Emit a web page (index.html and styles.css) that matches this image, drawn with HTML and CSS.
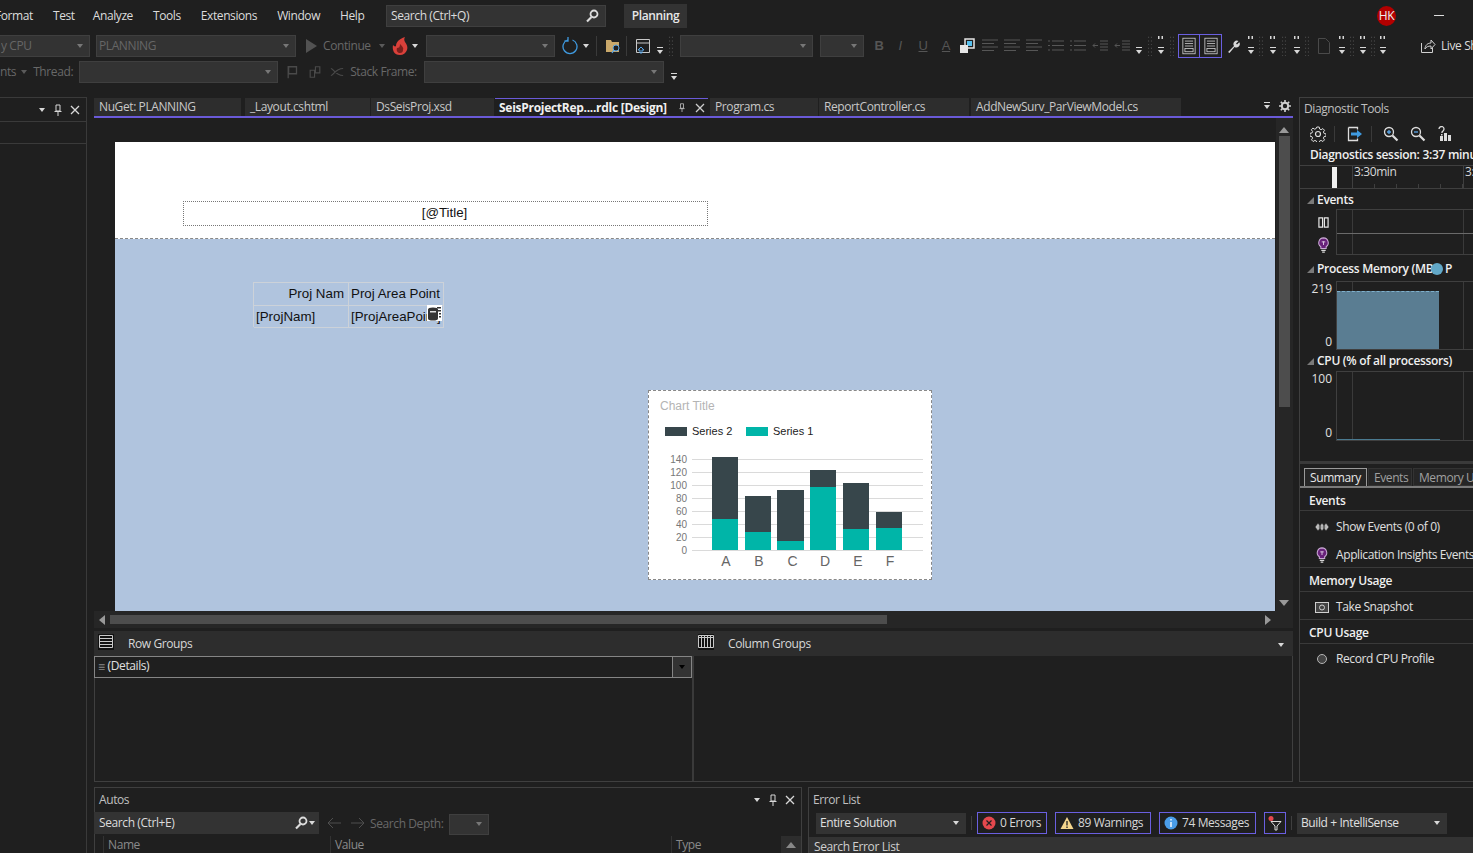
FILE: index.html
```html
<!DOCTYPE html>
<html lang="en">
<head>
<meta charset="utf-8">
<title>Planning - Visual Studio</title>
<link rel="stylesheet" href="styles.css">
</head>
<body>
<svg class="defs" width="0" height="0">
  <symbol id="caret" viewBox="0 0 8 8"><path d="M1 2h6L4 6z" fill="currentColor"/></symbol>
  <symbol id="more" viewBox="0 0 8 12"><path d="M1 3h6v1H1z M1 6h6L4 10z" fill="currentColor"/></symbol>
  <symbol id="more2" viewBox="0 0 8 20"><path d="M1 0h1.500v3H1zM4.500 0H6v3H4.500zM1 11h6v1H1zM1 14h6l-3 4z" fill="currentColor"/></symbol>
  <symbol id="grip" viewBox="0 0 6 24"><path d="M1 2h1v1H1zM4 2h1v1H4zM1 6h1v1H1zM4 6h1v1H4zM1 10h1v1H1zM4 10h1v1H4zM1 14h1v1H1zM4 14h1v1H4zM1 18h1v1H1zM4 18h1v1H4zM1 22h1v1H1zM4 22h1v1H4z" fill="#5a5a5a"/></symbol>
  <symbol id="mag" viewBox="0 0 14 14"><circle cx="9" cy="5" r="3.500" fill="none" stroke="currentColor" stroke-width="1.800"/><path d="M6.500 8 2 12.500" stroke="currentColor" stroke-width="2.200"/></symbol>
  <symbol id="pin" viewBox="0 0 10 12"><path d="M3 1h4v6H3zM1.500 7.500h7M5 8v4" fill="none" stroke="currentColor"/></symbol>
  <symbol id="close" viewBox="0 0 10 10"><path d="M1 1l8 8M9 1 1 9" stroke="currentColor" stroke-width="1.300"/></symbol>
  <symbol id="align" viewBox="0 0 16 14"><path d="M0 1h16M0 4.500h12M0 8h16M0 11.500h12" stroke="#565656"/></symbol>
  <symbol id="list" viewBox="0 0 16 14"><path d="M0 2h2M0 6.500h2M0 11h2M4 2h12M4 6.500h12M4 11h12" stroke="#565656"/></symbol>
  <symbol id="indent" viewBox="0 0 16 14"><path d="M8 2h8M8 5h8M8 8h8M8 11h8M1 6.500h5M3 4.500l-2 2 2 2" fill="none" stroke="#565656"/></symbol>
  <symbol id="doc" viewBox="0 0 18 22"><rect x="1.500" y="1.500" width="15" height="19" fill="none" stroke="#cfcfcf"/><path d="M4 5h10M4 8h10M4 11h10" stroke="#cfcfcf"/><rect x="4" y="14" width="10" height="4" fill="none" stroke="#cfcfcf"/></symbol>
  <symbol id="bulb" viewBox="0 0 14 18"><path d="M7 1a5.500 5.500 0 0 0-3 10v2h6v-2A5.500 5.500 0 0 0 7 1z" fill="#68217a" stroke="#c9a8d4" stroke-width="1.200"/><path d="M7 5v4M5 5.500h4" stroke="#e4d3ea"/><path d="M4.500 15h5M5.500 17h3" stroke="#d6d6d6" stroke-width="1.300"/></symbol>
</svg>

<div class="app">
  <header class="titlebar">
    <nav class="menu">
      <span>Format</span><span>Test</span><span>Analyze</span><span>Tools</span><span>Extensions</span><span>Window</span><span>Help</span>
    </nav>
    <div class="quick">
      <span>Search (Ctrl+Q)</span>
      <svg class="i14"><use href="#mag"/></svg>
    </div>
    <div class="solution">Planning</div>
    <div class="avatar">HK</div>
    <div class="minimize"></div>
  </header>

  <div class="toolbar tb-one">
    <div class="combo w90 clip-left"><span>y CPU</span><svg class="cc"><use href="#caret"/></svg></div>
    <div class="combo w200 ml6"><span>PLANNING</span><svg class="cc"><use href="#caret"/></svg></div>
    <svg class="play ml9" viewBox="0 0 12 14"><path d="M1 0l11 7-11 7z" fill="#525252"/></svg>
    <span class="dim cont ml6">Continue</span>
    <svg class="c8 ml5 dimc"><use href="#caret"/></svg>
    <svg class="i16t ml6" viewBox="0 0 16 18"><path d="M8 18C2 18 0 13 1 8c1 1 2 2 3 1 0-4 3-7 9-9-1 2-1 3 0 5 2 3 3 5 2 8-1 3-4 5-7 5z" fill="#d9403a"/><path d="M8 16c-2 0-4-2-3-5 2 0 3-1 3-4 2 2 4 4 3 6 0 2-1 3-3 3z" fill="#7a1f1c"/></svg>
    <svg class="c8 ml3 lightc"><use href="#caret"/></svg>
    <div class="combo w129 ml7"><svg class="cc"><use href="#caret"/></svg></div>
    <svg class="i16t ml7" viewBox="0 0 16 18"><path d="M5.500 3a7 7 0 1 0 5 0M6 0v4H2.500" fill="none" stroke="#3f9ae0" stroke-width="1.300"/></svg>
    <svg class="c8 ml4 lightc"><use href="#caret"/></svg>
    <span class="vsep ml6"></span>
    <svg class="i16 ml8" viewBox="0 0 16 16"><path d="M1 2h5l1 2h7v10H1z" fill="#c9a86a"/><circle cx="11" cy="10" r="3" fill="#1f1f1f" stroke="#5aa6e8"/><path d="M9 12l-2 3" stroke="#5aa6e8" stroke-width="1.300"/></svg>
    <span class="vsep ml5"></span>
    <svg class="i16 ml8" viewBox="0 0 16 16"><path d="M1.500 1.500h13v13h-13zM1.500 5h13" fill="none" stroke="#c8c8c8"/><path d="M5 15v-3H3l3-3 3 3H7v3z" fill="none" stroke="#5aa6e8"/></svg>
    <svg class="more ml5 lightc"><use href="#more"/></svg>
    <svg class="grip ml4"><use href="#grip"/></svg>
    <div class="combo w133 ml6"><svg class="cc"><use href="#caret"/></svg></div>
    <div class="combo w44 ml7"><svg class="cc"><use href="#caret"/></svg></div>
    <span class="fmt b ml10">B</span>
    <span class="fmt it ml11">I</span>
    <span class="fmt un ml13">U</span>
    <span class="fmt un ml13">A</span>
    <svg class="i16 ml8" viewBox="0 0 16 16"><rect x="6" y="1" width="9" height="9" fill="#1f1f1f" stroke="#e6e6e6" stroke-width="1.500"/><rect x="8" y="3" width="5" height="5" fill="#58c0ee"/><rect x="1" y="7" width="8" height="8" fill="#e6e6e6"/></svg>
    <svg class="al ml7"><use href="#align"/></svg>
    <svg class="al ml6"><use href="#align"/></svg>
    <svg class="al ml6"><use href="#align"/></svg>
    <svg class="al ml6"><use href="#list"/></svg>
    <svg class="al ml6"><use href="#list"/></svg>
    <svg class="al ml6"><use href="#indent"/></svg>
    <svg class="al ml6"><use href="#indent"/></svg>
    <svg class="more ml5 lightc"><use href="#more"/></svg>
    <svg class="grip ml4"><use href="#grip"/></svg>
    <svg class="more2 ml4 lightc"><use href="#more2"/></svg>
    <svg class="grip ml4"><use href="#grip"/></svg>
    <div class="tgl ml3"><svg class="docic"><use href="#doc"/></svg></div>
    <div class="tgl tgl2"><svg class="docic"><use href="#doc"/></svg></div>
    <svg class="i14 ml4 lightc" viewBox="0 0 14 14"><path d="M2 13l6-6a3.500 3.500 0 0 1 4.500-5L10 4.500l1 1 2.300-2.300A3.500 3.500 0 0 1 8.500 8L3.500 14z" fill="currentColor"/></svg>
    <svg class="more2 ml7 lightc"><use href="#more2"/></svg>
    <svg class="grip ml3"><use href="#grip"/></svg>
    <svg class="more2 ml5 lightc"><use href="#more2"/></svg>
    <svg class="grip ml4"><use href="#grip"/></svg>
    <svg class="more2 ml6 lightc"><use href="#more2"/></svg>
    <svg class="grip ml3"><use href="#grip"/></svg>
    <svg class="i16t ml6" viewBox="0 0 16 18"><path d="M2.500 1.500h7l4 4v11h-11z" fill="none" stroke="#4a4a4a"/></svg>
    <svg class="more2 ml6 lightc"><use href="#more2"/></svg>
    <svg class="grip ml3"><use href="#grip"/></svg>
    <svg class="more2 ml4 lightc"><use href="#more2"/></svg>
    <svg class="grip ml3"><use href="#grip"/></svg>
    <svg class="more2 ml3 lightc"><use href="#more2"/></svg>
    <svg class="i16 ml33" viewBox="0 0 16 16"><path d="M1.500 5v9.500h11V10M5 11c0-4 3-6 6-6V2l4 4.500L11 11V8c-3 0-5 1-6 3z" fill="none" stroke="#d0d0d0"/></svg>
    <span class="live ml5">Live Share</span>
  </div>

  <div class="toolbar tb-two">
    <span class="dim clip-nts">nts</span>
    <svg class="c8 ml4 dimc"><use href="#caret"/></svg>
    <span class="dim ml5">Thread:</span>
    <div class="combo w199 ml6"><svg class="cc"><use href="#caret"/></svg></div>
    <svg class="i14 ml8" viewBox="0 0 14 16"><path d="M1.500 1v14M2 2h9v8H2z" fill="none" stroke="#4a4a4a" stroke-width="1.500"/></svg>
    <svg class="i14 ml8" viewBox="0 0 14 16"><path d="M1.500 6h5v8h-5zM7.500 2h5v7h-5z" fill="none" stroke="#4a4a4a" stroke-width="1.300"/></svg>
    <svg class="i14 ml8" viewBox="0 0 16 12"><path d="M1 2c3 0 5 8 14 8M1 10c3 0 5-8 14-8" fill="none" stroke="#4a4a4a" stroke-width="1.300"/></svg>
    <span class="dim ml6">Stack Frame:</span>
    <div class="combo w240 ml7"><svg class="cc"><use href="#caret"/></svg></div>
    <svg class="more ml6 lightc"><use href="#more"/></svg>
  </div>

  <div class="main">
    <aside class="leftpanel">
      <div class="lp-head">
        <svg class="c8 lightc"><use href="#caret"/></svg>
        <svg class="pin lightc"><use href="#pin"/></svg>
        <svg class="x lightc"><use href="#close"/></svg>
      </div>
      <div class="lp-box"></div>
    </aside>

    <div class="rest">
      <div class="upper">
        <section class="center">
          <div class="tabs">
            <div class="tab t-nuget">NuGet: PLANNING</div>
            <div class="tab t-layout">_Layout.cshtml</div>
            <div class="tab t-ds">DsSeisProj.xsd</div>
            <div class="tab active">
              <span>SeisProjectRep....rdlc [Design]</span>
              <svg class="pinh"><use href="#pin"/></svg>
              <svg class="x"><use href="#close"/></svg>
            </div>
            <div class="tab t-prog">Program.cs</div>
            <div class="tab t-rep">ReportController.cs</div>
            <div class="tab t-add">AddNewSurv_ParViewModel.cs</div>
            <div class="tab-tools">
              <svg class="more lightc"><use href="#more"/></svg>
              <svg class="gear" viewBox="0 0 12 12"><circle cx="6" cy="6" r="3.200" fill="none" stroke="#d0d0d0" stroke-width="2"/><path d="M6 0v2.500M6 9.500V12M0 6h2.500M9.500 6H12M1.800 1.800l1.800 1.800M8.400 8.400l1.800 1.800M10.200 1.800 8.400 3.600M3.600 8.400l-1.800 1.800" stroke="#d0d0d0" stroke-width="1.600"/></svg>
            </div>
          </div>

          <div class="designer">
            <div class="surface-wrap">
              <div class="surface">
                <div class="rpt-header">
                  <div class="title-box">[@Title]</div>
                </div>
                <div class="rpt-body">
                  <div class="tablix">
                    <div class="cell right">Proj Nam</div>
                    <div class="cell">Proj Area Point</div>
                    <div class="cell">[ProjNam]</div>
                    <div class="cell">[ProjAreaPoint]</div>
                    <svg class="smart" viewBox="0 0 15 16"><rect x="0" y="0" width="15" height="16" fill="#fff"/><ellipse cx="6" cy="4.500" rx="5" ry="2" fill="#333"/><rect x="1" y="4.500" width="10" height="9" fill="#333"/><ellipse cx="6" cy="13.500" rx="5" ry="2" fill="#333"/><rect x="3" y="6" width="6" height="1.500" fill="#ddd"/><path d="M10 2h4v1.500h-4zM11 5h3v1.500h-3zM12 8h2v1.500h-2zM12 11h2v1.500h-2z" fill="#333"/></svg>
                  </div>
                  <div class="chart">
                    <svg class="chart-svg" viewBox="0 0 282 188" width="282" height="188">
                      <text class="ct" x="11" y="19">Chart Title</text>
                      <rect x="16" y="36" width="22" height="9" fill="#37464b"/>
                      <text class="lg" x="43" y="44">Series 2</text>
                      <rect x="97" y="36" width="22" height="9" fill="#00b5a8"/>
                      <text class="lg" x="124" y="44">Series 1</text>
                      <g class="grid">
                        <path d="M43 68.500h231M43 81.500h231M43 94.500h231M43 107.500h231M43 120.500h231M43 133.500h231M43 146.500h231M43 159.500h231"/>
                      </g>
                      <g class="yl">
                        <text x="38" y="72">140</text><text x="38" y="85">120</text><text x="38" y="98">100</text><text x="38" y="111">80</text><text x="38" y="124">60</text><text x="38" y="137">40</text><text x="38" y="150">20</text><text x="38" y="163">0</text>
                      </g>
                      <g fill="#37464b">
                        <rect x="63" y="66" width="26" height="62"/><rect x="96" y="105" width="26" height="36"/><rect x="128" y="99" width="27" height="51"/><rect x="161" y="79" width="26" height="17"/><rect x="194" y="92" width="26" height="46"/><rect x="227" y="121" width="26" height="16"/>
                      </g>
                      <g fill="#00b5a8">
                        <rect x="63" y="128" width="26" height="31"/><rect x="96" y="141" width="26" height="18"/><rect x="128" y="150" width="27" height="9"/><rect x="161" y="96" width="26" height="63"/><rect x="194" y="138" width="26" height="21"/><rect x="227" y="137" width="26" height="22"/>
                      </g>
                      <g class="xl">
                        <text x="77" y="175">A</text><text x="110" y="175">B</text><text x="143.500" y="175">C</text><text x="176" y="175">D</text><text x="209" y="175">E</text><text x="241" y="175">F</text>
                      </g>
                    </svg>
                  </div>
                </div>
              </div>
              <div class="hscroll">
                <svg class="sa" viewBox="0 0 6 10"><path d="M6 0v10L0 5z" fill="#999"/></svg>
                <div class="hthumb"></div>
                <svg class="sa sa-r" viewBox="0 0 6 10"><path d="M0 0v10l6-5z" fill="#999"/></svg>
              </div>
            </div>
            <div class="vscroll">
              <svg class="sv" viewBox="0 0 10 6"><path d="M0 6h10L5 0z" fill="#999"/></svg>
              <div class="vthumb"></div>
              <svg class="sv sv-b" viewBox="0 0 10 6"><path d="M0 0h10L5 6z" fill="#999"/></svg>
            </div>
          </div>

          <div class="group-bar">
            <div class="gb-col gb-row">
              <svg class="gi" viewBox="0 0 16 16"><rect x="0" y="0" width="16" height="16" fill="#111"/><path d="M1.500 1.500h13v12h-13zM1.500 4.500h13M1.500 7.500h13M1.500 10.500h13" fill="none" stroke="#c8c8c8"/></svg>
              <span>Row Groups</span>
            </div>
            <div class="gb-col">
              <svg class="gi" viewBox="0 0 16 16"><rect x="0" y="0" width="16" height="16" fill="#111"/><path d="M.500 1.500h15v12H.500zM3.500 1.500v12M6.500 1.500v12M9.500 1.500v12M12.500 1.500v12M.500 3.500h15" fill="none" stroke="#c8c8c8"/></svg>
              <span>Column Groups</span>
            </div>
            <svg class="c8 lightc gb-caret"><use href="#caret"/></svg>
          </div>
          <div class="group-panes">
            <div class="pane-left">
              <div class="details">
                <span class="eq">≡</span><span class="dt">(Details)</span>
                <span class="dbtn"><svg class="c8"><use href="#caret"/></svg></span>
              </div>
            </div>
            <div class="pane-right"></div>
          </div>
        </section>

        <aside class="diag">
          <div class="dg-title">Diagnostic Tools</div>
          <div class="dg-tools">
            <svg class="dgi g1" viewBox="0 0 16 16"><circle cx="8" cy="8" r="2.500" fill="none" stroke="#ddd" stroke-width="1.200"/><path d="M6.800 1h2.400l.4 2 1.500.7 1.800-1.100 1.600 1.700-1.100 1.700.7 1.500 2 .4v2.300l-2 .4-.7 1.500 1.100 1.700-1.600 1.700-1.800-1.100-1.500.7-.4 2H6.800l-.4-2-1.500-.7-1.800 1.100-1.600-1.700 1.100-1.700-.7-1.500-2-.4V7.400l2-.4.7-1.500L1.300 3.800l1.600-1.700 1.800 1.100 1.500-.7z" fill="none" stroke="#ddd"/></svg>
            <span class="dg-sep"></span>
            <svg class="dgi g2" viewBox="0 0 16 16"><path d="M1.500 1.500h9v2M1.500 1.500v13h9v-2" fill="none" stroke="#ddd" stroke-width="1.300"/><path d="M4 6.500h6V4l5 4-5 4V9.500H4z" fill="#3f9ae0"/></svg>
            <span class="dg-sep"></span>
            <svg class="dgi g3" viewBox="0 0 16 16"><circle cx="6" cy="6" r="4.500" fill="none" stroke="#ddd" stroke-width="1.300"/><path d="M4 6h4M6 4v4" stroke="#5aa6e8" stroke-width="1.300"/><path d="M9.500 9.500l5 5" stroke="#ddd" stroke-width="2.200"/></svg>
            <svg class="dgi g4" viewBox="0 0 16 16"><circle cx="6" cy="6" r="4.500" fill="none" stroke="#ddd" stroke-width="1.300"/><path d="M4 6h4" stroke="#5aa6e8" stroke-width="1.300"/><path d="M9.500 9.500l5 5" stroke="#ddd" stroke-width="2.200"/></svg>
            <svg class="dgi g5" viewBox="0 0 16 16"><path d="M2 3a2.500 2.500 0 1 1 4 2L5 6v1" fill="none" stroke="#ddd" stroke-width="1.300"/><path d="M4 8h1.500v1.500H4zM3 10h3v5H3zM7 7h3v8H7zM11 9h3v6h-3z" fill="#ddd"/></svg>
          </div>
          <div class="dg-session">Diagnostics session: 3:37 minutes</div>
          <div class="ruler">
            <span class="marker"></span>
            <span class="r-lab r-a">3:30min</span>
            <span class="r-lab r-b">3:40min</span>
          </div>

          <div class="sec-h ev-h"><i class="tri"></i>Events</div>
          <div class="trk trk-ev">
            <div class="trk-ic">
              <svg class="evi" viewBox="0 0 12 12"><path d="M1 1h4v10H1zM7 1h4v10H7z" fill="none" stroke="#e8e8e8" stroke-width="1.300"/></svg>
              <svg class="evb"><use href="#bulb"/></svg>
            </div>
            <div class="plot ev-plot"><span class="vline"></span></div>
          </div>

          <div class="sec-h pm-h"><i class="tri"></i><span>Process Memory (MB</span><span class="pm-dot"></span><span class="pm-p">P</span></div>
          <div class="trk trk-pm">
            <div class="axis"><span>219</span><span>0</span></div>
            <div class="plot"><span class="vline"></span><span class="mem"></span></div>
          </div>

          <div class="sec-h cpu-h"><i class="tri"></i>CPU (% of all processors)</div>
          <div class="trk trk-cpu">
            <div class="axis"><span>100</span><span>0</span></div>
            <div class="plot"><span class="vline"></span><span class="cpu"></span></div>
          </div>

          <div class="splitter"></div>
          <div class="dg-tabs">
            <span class="dt-tab on">Summary</span><span class="dt-tab ev">Events</span><span class="dt-tab">Memory Usage</span>
          </div>
          <div class="s-h first">Events</div>
          <div class="s-row r1">
            <svg class="si" viewBox="0 0 14 8"><path d="M3 0l3 4-3 4-3-4zM7 0l3 4-3 4-3-4zM11 0l3 4-3 4-3-4z" fill="#bdbdbd" stroke="#1f1f1f" stroke-width=".6"/></svg>
            <span>Show Events (0 of 0)</span>
          </div>
          <div class="s-row r2">
            <svg class="si sb"><use href="#bulb"/></svg>
            <span>Application Insights Events</span>
          </div>
          <div class="s-h bt">Memory Usage</div>
          <div class="s-row r3">
            <svg class="si" viewBox="0 0 14 12"><rect x=".5" y="1.500" width="13" height="10" fill="#444" stroke="#cfcfcf"/><circle cx="7" cy="6.500" r="2.500" fill="none" stroke="#cfcfcf"/></svg>
            <span>Take Snapshot</span>
          </div>
          <div class="s-h bt">CPU Usage</div>
          <div class="s-row r3">
            <svg class="si" viewBox="0 0 14 12"><circle cx="7" cy="6" r="4.500" fill="#444" stroke="#b5b5b5"/></svg>
            <span>Record CPU Profile</span>
          </div>
        </aside>
      </div>

      <div class="lower">
        <section class="autos">
          <div class="lo-title">
            <span>Autos</span>
            <svg class="c8 lightc a-c"><use href="#caret"/></svg>
            <svg class="pin lightc"><use href="#pin"/></svg>
            <svg class="x lightc"><use href="#close"/></svg>
          </div>
          <div class="lo-bar">
            <div class="a-search"><span>Search (Ctrl+E)</span><svg class="i14"><use href="#mag"/></svg><svg class="c8 lightc"><use href="#caret"/></svg></div>
            <svg class="arr" viewBox="0 0 14 12"><path d="M14 6H1M6 1 1 6l5 5" fill="none" stroke="#4f4f4f"/></svg>
            <svg class="arr" viewBox="0 0 14 12"><path d="M0 6h13M8 1l5 5-5 5" fill="none" stroke="#4f4f4f"/></svg>
            <span class="dim sd">Search Depth:</span>
            <div class="combo w40"><svg class="cc"><use href="#caret"/></svg></div>
          </div>
          <div class="a-cols">
            <span class="ac ac-n">Name</span><span class="ac ac-v">Value</span><span class="ac ac-t">Type</span>
            <span class="a-up"><svg class="sup" viewBox="0 0 10 6"><path d="M0 6h10L5 0z" fill="#888"/></svg></span>
          </div>
        </section>
        <section class="errors">
          <div class="lo-title"><span>Error List</span></div>
          <div class="lo-bar e-bar">
            <div class="e-combo w150"><span>Entire Solution</span><svg class="c8 lightc"><use href="#caret"/></svg></div>
            <span class="e-sep s1"></span>
            <div class="e-btn b1"><svg class="ei" viewBox="0 0 14 14"><circle cx="7" cy="7" r="6.500" fill="#e5484d"/><path d="M4.500 4.500l5 5M9.500 4.500l-5 5" stroke="#1f1f1f" stroke-width="1.200"/></svg><span>0 Errors</span></div>
            <div class="e-btn b2"><svg class="ei" viewBox="0 0 14 14"><path d="M7 1l6.500 12H.5z" fill="#f4d58d"/><path d="M7 5v4.500M7 10.500V12" stroke="#1f1f1f" stroke-width="1.300"/></svg><span>89 Warnings</span></div>
            <div class="e-btn b3"><svg class="ei" viewBox="0 0 14 14"><circle cx="7" cy="7" r="6.500" fill="#4a9de8"/><path d="M7 6v5M7 3v1.500" stroke="#fff" stroke-width="1.400"/></svg><span>74 Messages</span></div>
            <div class="e-btn b4"><svg class="ef" viewBox="0 0 16 16"><circle cx="4" cy="3.500" r="2.500" fill="#e5484d"/><path d="M4 6.500h10L10 11v4H8v-4z" fill="none" stroke="#ddd"/></svg></div>
            <span class="e-sep s2"></span>
            <div class="e-combo w150"><span>Build + IntelliSense</span><svg class="c8 lightc"><use href="#caret"/></svg></div>
          </div>
          <div class="e-search">Search Error List</div>
        </section>
      </div>
    </div>
  </div>
</div>
</body>
</html>
```

FILE: styles.css
```css
* { box-sizing: border-box; }
html, body { margin: 0; height: 100%; }
body { background: #1f1f1f; color: #dcdcdc; font: 12px/16px "Open Sans", "Noto Sans", sans-serif; letter-spacing: -.4px; overflow: hidden; }
svg { display: block; flex: none; }
.defs { position: absolute; }
.app { width: 1473px; height: 853px; overflow: hidden; }

.titlebar { height: 34px; display: flex; align-items: flex-start; position: relative; }
.menu { display: flex; gap: 20px; margin-left: -5px; padding-top: 8px; width: 391px; }
.menu span { white-space: nowrap; }
.menu span:nth-child(2) { margin-right: -2px; }
.quick { width: 220px; height: 22px; margin-top: 5px; background: #333; border: 1px solid #3f3f3f; display: flex; align-items: center; justify-content: space-between; padding: 0 6px 0 4px; }
.i14 { width: 14px; height: 14px; }
.solution { margin: 4px 0 0 18px; width: 63px; height: 24px; background: #333; text-align: center; line-height: 24px; font-weight: 600; color: #e8e8e8; }
.avatar { position: absolute; left: 1377px; top: 6px; width: 19px; height: 20px; border-radius: 50%; background: #b30000; color: #eee; text-align: center; line-height: 20px; }
.minimize { position: absolute; left: 1434px; top: 15px; width: 10px; height: 1px; background: #ddd; }

.toolbar { display: flex; align-items: center; white-space: nowrap; }
.toolbar > * { flex: none; }
.tb-one { height: 24px; margin-bottom: 2px; }
.tb-two { height: 24px; margin-bottom: 13px; }
.combo { height: 22px; background: #333; border: 1px solid #3f3f3f; display: flex; align-items: center; justify-content: space-between; color: #666; padding: 0 5px 0 2px; flex: none; }
.combo span { overflow: hidden; }
.cc { width: 8px; height: 8px; color: #777; margin-left: auto; }
.w90 { width: 90px; } .w200 { width: 200px; } .w129 { width: 129px; } .w133 { width: 133px; } .w44 { width: 44px; } .w199 { width: 199px; } .w240 { width: 240px; } .w40 { width: 40px; } .w150 { width: 150px; }
.clip-left { border-left: 0; padding-left: 1px; }
.ml3 { margin-left: 3px; } .ml4 { margin-left: 4px; } .ml5 { margin-left: 5px; } .ml6 { margin-left: 6px; } .ml7 { margin-left: 7px; } .ml8 { margin-left: 8px; } .ml9 { margin-left: 9px; } .ml10 { margin-left: 10px; } .ml11 { margin-left: 11px; } .ml13 { margin-left: 13px; } .ml33 { margin-left: 33px; }
.dim { color: #686868; }
.cont { width: 50px; }
.dimc { color: #5a5a5a; }
.lightc { color: #d8d8d8; }
.play { width: 12px; height: 14px; }
.c8 { width: 8px; height: 8px; }
.i16 { width: 16px; height: 16px; }
.i16t { width: 16px; height: 18px; }
.vsep { width: 1px; height: 20px; background: #3a3a3a; }
.more { width: 8px; height: 12px; align-self: flex-end; margin-bottom: 2px; }
.more2 { width: 8px; height: 20px; }
.grip { width: 6px; height: 22px; }
.fmt { color: #555; width: 10px; text-align: center; font-size: 13px; font-family: "Liberation Sans", sans-serif; }
.fmt.b { font-weight: 700; }
.fmt.it { font-style: italic; }
.fmt.un { text-decoration: underline; }
.al { width: 16px; height: 14px; }
.tgl { width: 22px; height: 24px; border: 1px solid #6a5fe0; display: flex; align-items: center; justify-content: center; flex: none; }
.tgl2 { border-left: 0; }
.docic { width: 16px; height: 18px; }
.live { color: #dcdcdc; }

.main { display: flex; height: 756px; }
.leftpanel { width: 87px; height: 756px; border-right: 1px solid #3a3a3a; border-top: 1px solid #3a3a3a; flex: none; }
.lp-head { height: 23px; display: flex; align-items: center; justify-content: flex-end; gap: 7px; padding-right: 6px; }
.pin { width: 10px; height: 12px; }
.x { width: 10px; height: 10px; }
.lp-box { height: 23px; border-top: 1px solid #3a3a3a; border-bottom: 1px solid #3a3a3a; }
.rest { width: 1386px; margin-left: 7px; flex: none; }
.upper { display: flex; height: 685px; }

.center { width: 1199px; flex: none; margin-top: 1px; }
.tabs { height: 20px; display: flex; border-bottom: 2px solid #6a5ad8; position: relative; }
.tab { height: 18px; background: #2d2d2d; padding: 0 4px 0 5px; line-height: 17px; color: #c8c8c8; flex: none; overflow: hidden; white-space: nowrap; margin-left: 1px; }
.t-nuget { width: 147px; margin-left: 0; }
.t-layout { width: 125px; margin-left: 4px; }
.t-ds { width: 123px; margin-left: 1px; }
.t-prog { width: 108px; margin-left: 2px; }
.t-rep { width: 150px; margin-left: 1px; }
.t-add { width: 210px; margin-left: 2px; }
.tab.active { width: 213px; background: #1f1f1f; border-top: 1px solid #6a5ad8; padding-left: 4px; display: flex; align-items: center; font-weight: 700; color: #f0f0f0; margin-left: 1px; }
.tab.active span { letter-spacing: -.28px; }
.tab.active .pinh { width: 8px; height: 9px; margin-left: 11px; color: #ccc; }
.tab.active .x { margin-left: 9px; color: #ccc; }
.tab-tools { position: absolute; right: 0; top: 1px; display: flex; gap: 8px; align-items: center; padding-right: 2px; }
.gear { width: 12px; height: 12px; }

.designer { height: 510px; display: flex; position: relative; }
.surface-wrap { width: 1199px; height: 510px; flex: none; }
.surface { height: 493px; padding: 24px 18px 0 21px; }
.rpt-header { height: 97px; background: #fff; border-bottom: 1px dashed #888; position: relative; }
.rpt-body { height: 372px; background: #b0c4de; position: relative; }
.title-box { position: absolute; left: 68px; top: 59px; width: 525px; height: 25px; padding-right: 2px; border: 1px dotted #777; color: #111; font: 13.33px/21px "Liberation Sans", sans-serif; letter-spacing: 0; text-align: center; }
.tablix { position: absolute; left: 138px; top: 43px; width: 191px; height: 45px; display: grid; grid-template-columns: 95px 95px; grid-template-rows: 23px 22px; border-top: 1px solid #ccd2d9; border-left: 1px solid #ccd2d9; font: 13.33px/22px "Liberation Sans", sans-serif; letter-spacing: 0; color: #111; }
.cell { border-right: 1px solid #ccd2d9; border-bottom: 1px solid #ccd2d9; padding: 0 4px 0 2px; white-space: nowrap; overflow: hidden; }
.cell.right { text-align: right; }
.smart { position: absolute; left: 173px; top: 22px; width: 15px; height: 16px; }
.chart { position: absolute; left: 533px; top: 151px; width: 284px; height: 190px; background: #fff; border: 1px dashed #888; }
.chart-svg text { font-family: "Liberation Sans", sans-serif; letter-spacing: 0; }
.ct { font-size: 12px; fill: #b4b4b4; }
.lg { font-size: 11px; fill: #222; }
.grid path { stroke: #dadada; fill: none; }
.yl text { font-size: 10px; fill: #777; text-anchor: end; }
.xl text { font-size: 14px; fill: #666; text-anchor: middle; }

.vscroll { position: absolute; right: 0; top: 0; width: 17px; height: 493px; background: #262626; }
.sv { position: absolute; left: 3px; top: 9px; width: 10px; height: 6px; }
.sv-b { top: auto; bottom: 5px; }
.vthumb { position: absolute; left: 3px; top: 18px; width: 11px; height: 271px; background: #4d4d4d; }

.hscroll { display: flex; align-items: center; height: 17px; background: #262626; }
.sa { width: 6px; height: 10px; margin-left: 5px; }
.hthumb { width: 777px; height: 9px; background: #4d4d4d; margin-left: 5px; }
.sa-r { margin-left: auto; margin-right: 22px; }

.group-bar { height: 25px; margin-top: 3px; background: #2d2d2d; display: flex; align-items: center; position: relative; color: #d8d8d8; }
.gb-col { display: flex; align-items: center; gap: 14px; padding-left: 4px; }
.gb-row { width: 600px; }
.gi { width: 16px; height: 16px; margin-bottom: 3px; }
.gb-caret { position: absolute; right: 8px; top: 10px; }
.group-panes { height: 126px; display: flex; border-bottom: 1px solid #3f3f3f; }
.pane-left { width: 600px; border-left: 1px solid #3f3f3f; border-right: 2px solid #3a3a3a; }
.details { height: 22px; width: 598px; margin-left: -1px; border: 1px solid #858585; display: flex; align-items: center; position: relative; padding-left: 3px; }
.eq { color: #888; margin-right: 3px; }
.dt { color: #e0e0e0; margin-top: -2px; }
.dbtn { position: absolute; right: 0; top: 0; width: 19px; height: 20px; border-left: 1px solid #858585; display: flex; align-items: center; justify-content: center; color: #000; background: #333; }
.pane-right { flex: 1; border-right: 1px solid #3f3f3f; }

.diag { width: 180px; margin-left: 6px; flex: none; border-left: 1px solid #3f3f3f; border-top: 1px solid #3f3f3f; border-bottom: 1px solid #3f3f3f; height: 685px; }
.dg-title { height: 22px; padding: 3px 0 0 4px; color: #c0c0c0; white-space: nowrap; }
.dg-tools { height: 28px; display: flex; align-items: center; }
.dgi { width: 16px; height: 16px; }
.g1 { margin-left: 10px; }
.dg-sep { width: 1px; height: 16px; background: #3a3a3a; margin: 0 8px; }
.g2 { margin-left: 4px; }
.g3 { margin-left: 3px; }
.g4 { margin-left: 11px; }
.g5 { margin-left: 11px; }
.dg-session { height: 17px; padding-left: 10px; font-weight: 600; letter-spacing: -.3px; color: #f0f0f0; white-space: nowrap; line-height: 14px; }
.ruler { height: 24px; border-top: 1px solid #3f3f3f; border-bottom: 1px solid #3f3f3f; position: relative; }
.ruler::after { content: ""; position: absolute; left: 74px; bottom: 0; width: 90px; height: 4px; background: repeating-linear-gradient(90deg, #3f3f3f 0 1px, transparent 1px 22px); }
.marker { position: absolute; left: 32px; top: 1px; width: 5px; bottom: 0; background: #f0f0f0; }
.r-lab { position: absolute; top: -2px; white-space: nowrap; color: #d8d8d8; }
.r-a { left: 54px; }
.r-b { left: 165px; }
.r-a::before, .r-b::before { content: ""; position: absolute; left: -2px; top: 2px; height: 22px; width: 1px; background: #3f3f3f; }

.sec-h { position: relative; padding-left: 17px; font-weight: 600; letter-spacing: -.3px; color: #f0f0f0; white-space: nowrap; height: 16px; }
.tri { position: absolute; left: 7px; top: 5px; width: 0; height: 0; border-left: 7px solid transparent; border-bottom: 7px solid #7a7a7a; }
.ev-h { margin-top: 3px; }
.pm-h { margin-top: 6px; }
.pm-dot { position: absolute; left: 131px; top: 2px; width: 12px; height: 12px; border-radius: 50%; background: #62a8c8; }
.pm-p { position: absolute; left: 145px; top: 0; }
.cpu-h { margin-top: 3px; }
.trk { display: flex; }
.trk-ev { height: 46px; margin-top: 1px; }
.trk-pm { height: 69px; margin-top: 4px; }
.trk-cpu { height: 70px; margin-top: 2px; }
.trk-ic { width: 36px; flex: none; position: relative; }
.evi { position: absolute; left: 18px; top: 8px; width: 11px; height: 11px; }
.evb { position: absolute; left: 17px; top: 28px; width: 13px; height: 16px; }
.plot { flex: 1; border-top: 1px solid #3f3f3f; border-left: 1px solid #3f3f3f; border-bottom: 1px solid #3f3f3f; position: relative; }
.vline { position: absolute; left: 15px; top: 0; bottom: 0; width: 1px; background: #3a3a3a; }
.vline::after { content: ""; position: absolute; left: 111px; top: 0; bottom: 0; width: 1px; background: #3a3a3a; }
.ev-plot::after { content: ""; position: absolute; left: 0; right: 0; top: 23px; height: 1px; background: #6a6a6a; }
.axis { width: 36px; flex: none; display: flex; flex-direction: column; justify-content: space-between; text-align: right; padding: 0 4px 0 0; letter-spacing: 0; color: #e0e0e0; }
.mem { position: absolute; left: 0; bottom: 0; width: 102px; height: 58px; background: #5a7d92; border-top: 1px dashed #7fb0cc; }
.cpu { position: absolute; left: 0; bottom: 0; width: 103px; height: 1px; background: #4a7a90; }

.splitter { height: 3px; margin-top: 20px; background: #3a3a3a; }
.dg-tabs { height: 24px; padding: 4px 0 0 4px; border-bottom: 2px solid #7a7a7a; display: flex; gap: 1px; }
.dt-tab { height: 18px; padding: 0 5px; background: #262626; color: #a0a0a0; border: 1px solid #333; white-space: nowrap; line-height: 17px; }
.dt-tab.on { width: 64px; color: #e8e8e8; border: 1px solid #9a9a9a; border-bottom: 0; }
.dt-tab.ev { width: 44px; }
.s-h { height: 24px; padding-left: 9px; font-weight: 600; letter-spacing: -.3px; color: #f0f0f0; line-height: 25px; border-bottom: 1px solid #3a3a3a; }
.s-h.first { height: 23px; }
.s-h.bt { border-top: 1px solid #3a3a3a; height: 25px; }
.s-row { display: flex; align-items: center; padding-left: 15px; white-space: nowrap; color: #e0e0e0; }
.r1 { height: 32px; }
.r2 { height: 24px; }
.r3 { height: 27px; padding-top: 2px; }
.si { width: 14px; height: 12px; margin-right: 7px; }
.sb { height: 16px; }

.lower { display: flex; margin-top: 5px; height: 66px; }
.autos { width: 708px; flex: none; border-top: 1px solid #3f3f3f; border-right: 1px solid #3f3f3f; border-left: 1px solid #3f3f3f; position: relative; }
.errors { width: 665px; margin-left: 6px; flex: none; border-top: 1px solid #3f3f3f; border-left: 1px solid #3f3f3f; }
.lo-title { height: 24px; display: flex; align-items: center; padding-left: 4px; color: #c0c0c0; }
.lo-title span { flex: 1; }
.a-c { margin-right: 7px; }
.lo-title .pin { margin-right: 7px; }
.lo-title .x { margin-right: 6px; }
.lo-bar { height: 22px; display: flex; align-items: center; }
.a-search { width: 225px; height: 22px; margin-left: -1px; background: #333; display: flex; align-items: center; padding: 0 3px 0 5px; color: #dcdcdc; }
.a-search span { flex: 1; }
.arr { width: 14px; height: 12px; margin-left: 8px; }
.arr + .arr { margin-left: 10px; }
.sd { margin: 2px 5px 0 5px; }
.lo-bar .w40 { margin-top: 2px; height: 21px; }
.a-cols { height: 20px; position: relative; color: #8a8a8a; }
.ac { position: absolute; top: 3px; }
.ac-n { left: 13px; }
.ac-v { left: 240px; }
.ac-t { left: 581px; }
.ac::before { content: ""; position: absolute; left: -5px; top: -1px; height: 18px; width: 1px; background: #333; }
.a-up { position: absolute; right: 0; top: 2px; width: 20px; height: 18px; background: #2d2d2d; display: flex; align-items: center; justify-content: center; }
.sup { width: 10px; height: 6px; }
.e-bar { padding-left: 7px; }
.e-combo { height: 21px; background: #333; display: flex; align-items: center; justify-content: space-between; padding: 0 6px 0 4px; color: #e0e0e0; flex: none; }
.e-sep { width: 1px; height: 14px; background: #3f3f3f; }
.s1 { margin: 0 5px; }
.s2 { margin: 0 5px; }
.e-btn { height: 22px; border: 1px solid #6a5fe0; display: flex; align-items: center; gap: 4px; padding-left: 4px; flex: none; margin-right: 8px; color: #d8d8d8; white-space: nowrap; }
.b1 { width: 70px; }
.b2 { width: 96px; }
.b3 { width: 97px; }
.b4 { width: 22px; padding-left: 2px; margin-right: 0; }
.ei { width: 14px; height: 14px; }
.ef { width: 16px; height: 16px; }
.e-search { margin-top: 3px; height: 17px; background: #333; padding-left: 5px; color: #d0d0d0; line-height: 20px; }
```
